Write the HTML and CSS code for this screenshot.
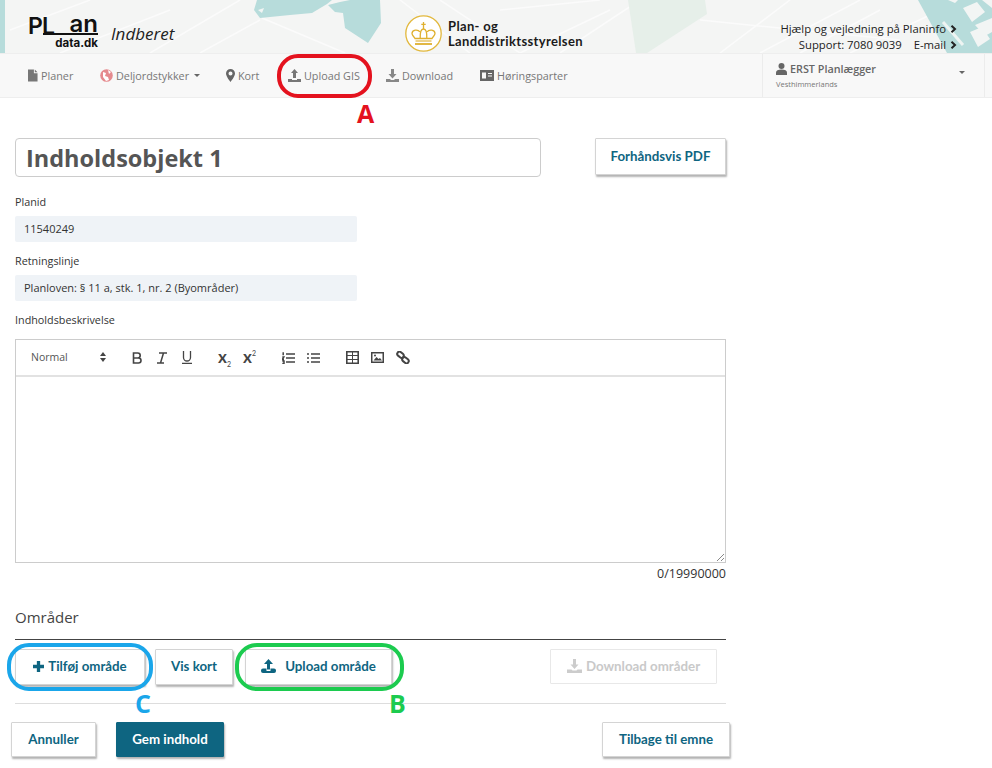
FILE: index.html
```html
<!DOCTYPE html>
<html lang="da">
<head>
<meta charset="utf-8">
<title>Plandata Indberet</title>
<link rel="stylesheet" href="styles.css">
</head>
<body>
<header class="top">
  <svg class="map" width="992" height="53" viewBox="0 0 992 53" aria-hidden="true">
    <g fill="none" stroke="#fbfbfb" stroke-width="1.5">
      <path d="M10 30L90 0M60 53L170 10M150 53L240 0M200 53L260 20M262 18L345 53M400 0L470 53M440 0L520 53M500 10L600 0M520 53L610 10M560 53L640 0M720 53L790 0M760 53L860 0M700 20L900 40M800 53L880 10M850 53L930 15"/>
    </g>
    <path class="water" d="M0 0H5V53H0Z"/>
    <path class="water" d="M257 0H332L327 4L312 13L290 15L260 18L254 10Z"/>
    <path class="land" d="M258 10L264 8L262 13Z"/>
    <path class="water" d="M340 2L350 0H380L381 23L368 43L345 28L343 13L335 12L328 5Z"/>
    <path class="park" d="M628 0H705L707 14L647 53H636Z"/>
    <path class="water" d="M918 0H992V53H947Z"/>
    <path d="M943 22L963 45" stroke="#eef4f2" stroke-width="3" fill="none"/>
    <g class="land">
      <path d="M948 0H958L955 3ZM963 8L977 2L985 12L972 22ZM982 0H992V8ZM975 25L992 18V32L985 36ZM970 32L982 27L990 39L978 47Z"/>
    </g>
  </svg>
  <div class="brand">
    <div class="logo">
      <div class="logo-main">
        <span class="logo-p">P</span>
        <span class="logo-rest"><span class="logo-l">L</span><span class="logo-an">an</span></span>
      </div>
      <div class="logo-sub">data.dk</div>
    </div>
    <span class="app-name">Indberet</span>
  </div>
  <div class="agency">
    <svg class="crest" width="37" height="37" viewBox="0 0 37 37" aria-hidden="true">
      <circle cx="18.500" cy="18.500" r="17.700" fill="#fff" stroke="#e2b83c" stroke-width="1.300"/>
      <g fill="none" stroke="#dfb02f" stroke-width="1.300">
        <path d="M18.500 7v7M16.300 9.300h4.400"/>
        <path d="M18.500 14c-2.500 0-3.500 3-3.300 9.500M18.500 14c2.500 0 3.500 3 3.300 9.500"/>
        <path d="M15 17c-2-3-8-2.500-8 1.500 0 2 2 3 3 5h17c1-2 3-3 3-5 0-4-6-4.500-8-1.500"/>
        <path d="M10.500 26h16" stroke-width="1.100"/>
        <path d="M10 29h17" stroke-width="1.800"/>
      </g>
    </svg>
    <div class="agency-name">Plan- og<br>Landdistriktsstyrelsen</div>
  </div>
  <div class="help">
    <div>Hjælp og vejledning på Planinfo<svg class="chev" width="7" height="8" viewBox="0 0 7 8"><path d="M1.500 .8L5 4 1.500 7.200" fill="none" stroke="#222" stroke-width="2"/></svg></div>
    <div>Support: 7080 9039 <span class="email">E-mail</span><svg class="chev" width="7" height="8" viewBox="0 0 7 8"><path d="M1.500 .8L5 4 1.500 7.200" fill="none" stroke="#222" stroke-width="2"/></svg></div>
  </div>
</header>

<nav class="nav">
  <a class="nav-item nav-planer">
    <svg class="ni" width="10" height="13" viewBox="0 0 11 13"><path d="M0 0h6.500v4h4v9H0zM7.500 0l3 3h-3z" fill="#777"/></svg>Planer
  </a>
  <a class="nav-item nav-del">
    <svg class="ni" width="13" height="13" viewBox="0 0 13 13"><circle cx="6.500" cy="6.500" r="6.300" fill="#e58a8e"/><path d="M3 3l3 1-1 3 3 1 1 3-3 1-3-4zM8 1l3 2-2 2z" fill="#fff"/></svg>Deljordstykker<span class="caret"></span>
  </a>
  <a class="nav-item nav-kort">
    <svg class="ni" width="9" height="13" viewBox="0 0 9 13"><path d="M4.500 0A4.500 4.500 0 0 0 0 4.500C0 7.500 4.500 13 4.500 13S9 7.500 9 4.500A4.500 4.500 0 0 0 4.500 0zm0 6.500a2 2 0 1 1 0-4 2 2 0 0 1 0 4z" fill="#666"/></svg>Kort
  </a>
  <a class="nav-item nav-up">
    <svg class="ni" width="13" height="13" viewBox="0 0 13 13"><path d="M6.500 0L10 4H8v5H5V4H3zM0 10h4v1h5v-1h4v3H0z" fill="#777"/></svg>Upload GIS
  </a>
  <a class="nav-item nav-down">
    <svg class="ni" width="13" height="13" viewBox="0 0 13 13"><path d="M5 0h3v5h2.500L6.500 9.500 2.500 5H5zM0 10h4l1 1h3l1-1h4v3H0z" fill="#888"/></svg>Download
  </a>
  <a class="nav-item nav-hor">
    <svg class="ni" width="14" height="11" viewBox="0 0 14 11"><path d="M0 0h14v11H0zM2 2.500v6h4v-6zM8 3v1h4V3zM8 5.500v1h4v-1z" fill="#666" fill-rule="evenodd"/></svg>Høringsparter
  </a>
  <div class="user">
    <div class="user-text">
      <div class="user-name">
        <svg class="ni" width="11" height="12" viewBox="0 0 11 12"><circle cx="5.500" cy="3" r="3" fill="#666"/><path d="M0 12V9.500C0 7.500 2 6.500 5.500 6.500S11 7.500 11 9.500V12z" fill="#666"/></svg>ERST Planlægger
      </div>
      <div class="user-org">Vesthimmerlands</div>
    </div>
    <span class="caret user-caret"></span>
  </div>
</nav>

<main class="main">
  <div class="title-row">
    <div class="title-input">Indholdsobjekt 1</div>
    <button class="btn btn-pdf">Forhåndsvis PDF</button>
  </div>

  <div class="label label-first">Planid</div>
  <div class="readonly">11540249</div>
  <div class="label">Retningslinje</div>
  <div class="readonly">Planloven: § 11 a, stk. 1, nr. 2 (Byområder)</div>
  <div class="label">Indholdsbeskrivelse</div>

  <div class="editor">
    <div class="toolbar">
      <span class="tb-select">Normal<svg width="6" height="10" viewBox="0 0 6 10"><path d="M3 0l3 4H0zM3 10L0 6h6z" fill="#444"/></svg></span>
      <span class="tb-group tb-format">
        <svg width="12" height="12" viewBox="0 0 12 12" fill="none" stroke="#444" stroke-width="1.600"><path d="M2.500 1h4.200a2.400 2.400 0 0 1 0 5H2.500zM2.500 6h5a2.500 2.500 0 0 1 0 5h-5z"/></svg>
        <svg width="12" height="12" viewBox="0 0 12 12" fill="none" stroke="#444" stroke-width="1.500"><path d="M3 1h8M1 11h7M7.500 1L4.500 11"/></svg>
        <svg width="12" height="13" viewBox="0 0 12 13" fill="none" stroke="#444" stroke-width="1.300"><path d="M2.500 0v6.500a3.500 3.500 0 0 0 7 0V0M1 12.500h10"/></svg>
      </span>
      <span class="tb-group tb-script">
        <span class="tb-x">x<sub>2</sub></span>
        <span class="tb-x">x<sup>2</sup></span>
      </span>
      <span class="tb-group tb-list">
        <svg width="13" height="12" viewBox="0 0 13 12" fill="none" stroke="#444" stroke-width="1.500"><path d="M4 2h9M4 6h9M4 10h9M1.200 .3v3M.3 5h1.500L.3 7.500h1.700M.3 9h1.700v2.500H.3"/></svg>
        <svg width="13" height="12" viewBox="0 0 13 12" fill="none" stroke="#444" stroke-width="1.500"><path d="M4 2h9M4 6h9M4 10h9M0 2h2M0 6h2M0 10h2"/></svg>
      </span>
      <span class="tb-group tb-ins">
        <svg width="13" height="13" viewBox="0 0 13 13" fill="none" stroke="#444"><path d="M.8.800h11.400v11.400H.8z" stroke-width="1.600"/><path d="M1 4.500h11M1 8.500h11M6.500 1v11" stroke-width="1"/></svg>
        <svg width="13" height="11" viewBox="0 0 13 11"><path d="M0 0h13v11H0zM1.500 1.500v8h10v-8z" fill="#444" fill-rule="evenodd"/><path d="M2.500 8.500l3-3.500 2 2 1.500-1 2 2.500z" fill="#444"/><circle cx="4" cy="3.500" r="1" fill="#444"/></svg>
        <svg width="14" height="13" viewBox="0 0 14 13" fill="none" stroke="#444" stroke-width="2"><rect x="1" y="1.500" width="7" height="4.500" rx="2.200" transform="rotate(40 4.500 3.700)"/><rect x="6" y="7" width="7" height="4.500" rx="2.200" transform="rotate(40 9.500 9.200)"/></svg>
      </span>
    </div>
    <div class="edit-area">
      <svg class="resize" width="7" height="7" viewBox="0 0 7 7"><path d="M0 7L7 0M4 7L7 4" stroke="#888" stroke-width="1"/></svg>
    </div>
  </div>
  <div class="counter">0/19990000</div>

  <h2 class="section">Områder</h2>
  <div class="btn-row">
    <button class="btn btn-tilfoj"><svg class="bi" width="11" height="11" viewBox="0 0 10 10"><path d="M3.500 0h3v3.500H10v3H6.500V10h-3V6.500H0v-3h3.500z" fill="#0e6581"/></svg>Tilføj område</button>
    <button class="btn btn-vis">Vis kort</button>
    <button class="btn btn-upload"><svg class="bi" width="15" height="14" viewBox="0 0 15 14"><path d="M7.500 0L12 5H9v5.500H6V5H3z" fill="#0e6581"/><path d="M2 9.500h3.500v2.500h4V9.500H13a2 2 0 0 1 2 2V12a2 2 0 0 1-2 2H2a2 2 0 0 1-2-2v-.5a2 2 0 0 1 2-2z" fill="#0e6581"/></svg>Upload område</button>
    <button class="btn btn-disabled"><svg class="bi" width="15" height="14" viewBox="0 0 15 14"><path d="M6 0h3v5.500h2.500L7.500 10 3.500 5.500H6zM0 10.500h4.500l1 1h4l1-1H15V14H0z" fill="#ccc"/></svg>Download områder</button>
  </div>
  <hr class="rule">
  <div class="footer-row">
    <button class="btn btn-annuller">Annuller</button>
    <button class="btn btn-primary">Gem indhold</button>
    <button class="btn btn-tilbage">Tilbage til emne</button>
  </div>
</main>

<div class="mark mark-a"></div><span class="letter letter-a">A</span>
<div class="mark mark-b"></div><span class="letter letter-b">B</span>
<div class="mark mark-c"></div><span class="letter letter-c">C</span>
</body>
</html>
```
FILE: styles.css
```css
* { box-sizing: border-box; }
html, body { margin: 0; padding: 0; }
body {
  position: relative;
  height: 768px;
  overflow: hidden;
  background: #fff;
  color: #333;
  font-family: "Open Sans", sans-serif;
  font-size: 11px;
}
.top {
  position: relative;
  height: 53px;
  background: #f4f5f4;
  display: flex;
  align-items: flex-start;
}
.map { position: absolute; left: 0; top: 0; }
.water { fill: #b7dcdb; }
.land { fill: #f2f5f4; }
.park { fill: #e6efe9; }
.brand, .agency { position: relative; }
.brand { display: flex; margin-left: 28px; margin-top: 17px; width: 377px; }
.logo { width: 70px; color: #111; font-family: Inter, sans-serif; font-weight: 600; }
.logo-main { display: flex; height: 18px; font-size: 23px; line-height: 18px; }
.logo-p { width: 15px; }
.logo-rest {
  flex: 1;
  display: flex;
  justify-content: space-between;
  height: 18px;
  border-bottom: 2px solid #111;
}
.logo-l { line-height: 19px; margin-left: -1px; }
.logo-an { line-height: 12px; font-size: 24px; margin-top: 1px; }
.logo-sub { font-size: 11.500px; line-height: 12px; text-align: right; margin-top: 2px; font-weight: 700; }
.app-name {
  margin-left: 13px;
  margin-top: 7px;
  font-family: "Open Sans", sans-serif;
  font-style: italic;
  font-size: 17px;
  line-height: 20px;
  color: #222;
}
.agency { display: flex; align-items: center; gap: 6px; margin-top: 15px; width: 377px; }
.crest { flex: none; }
.agency-name {
  font-family: Lato, sans-serif;
  font-weight: 700;
  font-size: 13px;
  line-height: 15px;
  color: #1b1b1b;
  letter-spacing: .35px;
}
.help {
  position: absolute;
  right: 35px;
  top: 21px;
  text-align: right;
  font-size: 11.300px;
  line-height: 16px;
  color: #222;
  white-space: nowrap;
}
.chev { margin-left: 4px; }
.email { margin-left: 9px; }
.nav {
  height: 45px;
  background: #f8f8f8;
  border-top: 1px solid #eee;
  border-bottom: 1px solid #eee;
  display: flex;
  align-items: center;
  padding-left: 28px;
  font-size: 10.800px;
  color: #777;
}
.nav-item { display: flex; align-items: center; white-space: nowrap; }
.ni { margin-right: 3px; flex: none; }
.nav-planer { width: 72px; }
.nav-del { width: 126px; }
.nav-kort { width: 62px; }
.nav-up { width: 98px; }
.nav-down { width: 94px; }
.nav-hor { width: 282px; }
.caret {
  display: inline-block;
  margin-left: 5px;
  border-left: 3.500px solid transparent;
  border-right: 3.500px solid transparent;
  border-top: 3.500px solid #666;
}
.user {
  align-self: stretch;
  width: 223px;
  border-left: 1px solid #ececec;
  border-right: 1px solid #ececec;
  display: flex;
  padding: 7px 11px 0 13px;
  justify-content: space-between;
}
.user-name { display: flex; align-items: center; font-weight: 600; font-size: 10.800px; line-height: 15px; color: #666; }
.user-org { font-size: 7.500px; line-height: 11px; margin-top: 3px; color: #777; }
.user-caret { margin: 10px 8px 0 0; height: 0; }
.main { width: 726px; padding: 40px 0 0 15px; }
.title-row { display: flex; align-items: flex-start; justify-content: space-between; }
.title-input {
  width: 526px;
  height: 39px;
  border: 1px solid #ccc;
  border-radius: 4px;
  padding-left: 10px;
  font-size: 23.500px;
  font-weight: 700;
  line-height: 38px;
  color: #555;
}
.btn {
  display: inline-flex;
  align-items: center;
  justify-content: center;
  height: 36px;
  background: #fff;
  border: 1px solid #d4d4d4;
  border-radius: 1px;
  box-shadow: 1px 2px 2px rgba(0,0,0,.3);
  color: #0e6581;
  font-family: Lato, sans-serif;
  font-weight: 700;
  font-size: 13.300px;
  padding: 0 0 2px;
  white-space: nowrap;
}
.btn-pdf { width: 131px; height: 37px; }
.label { margin-top: 11px; font-size: 10.800px; line-height: 15px; color: #333; }
.label-first { margin-top: 17px; }
.readonly {
  width: 342px;
  height: 26px;
  margin-top: 7px;
  background: #eff3f7;
  border-radius: 2px;
  padding-left: 9px;
  font-size: 11px;
  line-height: 26px;
  color: #333;
}
.editor { margin-top: 12px; height: 224px; border: 1px solid #ccc; display: flex; flex-direction: column; }
.toolbar {
  height: 37px;
  border-bottom: 2px solid #e2e2e2;
  display: flex;
  align-items: center;
  padding-left: 15px;
}
.tb-select { width: 75px; display: flex; justify-content: space-between; align-items: center; font-size: 10.500px; line-height: 12px; padding-bottom: 2px; color: #555; margin-right: 25px; }
.tb-group { display: flex; align-items: center; gap: 12px; flex: none; }
.tb-format { width: 87px; gap: 13px; }
.tb-script { width: 64px; gap: 0; font-family: Lato, sans-serif; font-weight: 700; font-size: 17px; color: #444; }
.tb-x { width: 25px; line-height: 14px; }
.tb-x sub, .tb-x sup { font-size: 7px; font-weight: 400; line-height: 0; }
.tb-list { width: 64px; }
.edit-area { flex: 1; position: relative; }
.resize { position: absolute; right: 1px; bottom: 1px; }
.counter { text-align: right; font-size: 12.500px; line-height: 17px; margin-top: 2px; color: #333; }
.section {
  margin: 25px 0 0;
  height: 33px;
  border-bottom: 1px solid #444;
  font-family: "Open Sans", sans-serif;
  font-weight: 400;
  font-size: 15px;
  line-height: 20px;
  color: #444;
}
.btn-row { display: flex; align-items: flex-start; margin-top: 9px; height: 36px; }
.bi { margin-right: 4px; flex: none; }
.btn-tilfoj { width: 130px; }
.btn-vis { width: 78px; margin-left: 10px; }
.btn-upload { width: 147px; margin-left: 12px; }
.btn-upload .bi { margin-right: 9px; }
.btn-disabled {
  width: 167px;
  height: 35px;
  margin-left: 158px;
  box-shadow: none;
  border-color: #e8e8e8;
  color: #c9c9c9;
}
.rule { height: 1px; margin: 18px 0 0; border: 0; background: #ddd; }
.footer-row { display: flex; align-items: center; margin: 18px 0 0 -4px; width: 719px; }
.btn-annuller { width: 85px; height: 35px; }
.btn-primary { width: 108px; height: 35px; margin-left: 20px; background: #0e6581; color: #fff; border-color: #0e6581; }
.btn-tilbage { width: 128px; height: 35px; margin-left: auto; }
.mark { position: absolute; border-width: 4px; border-style: solid; }
.mark-a { left: 277px; top: 54px; width: 95px; height: 44px; border-radius: 21px; border-color: #e4121e; }
.mark-b { left: 235px; top: 643px; width: 169px; height: 48px; border-radius: 22px; border-color: #1ccb4f; }
.mark-c { left: 7px; top: 643px; width: 146px; height: 48px; border-radius: 22px; border-color: #1aa6ea; }
.letter { position: absolute; font-family: "Open Sans", sans-serif; font-weight: 700; font-size: 25px; line-height: 26px; }
.letter-a { left: 357px; top: 100px; color: #e4121e; }
.letter-b { left: 389px; top: 690px; color: #1ccb4f; }
.letter-c { left: 135px; top: 690px; color: #1aa6ea; }
```
